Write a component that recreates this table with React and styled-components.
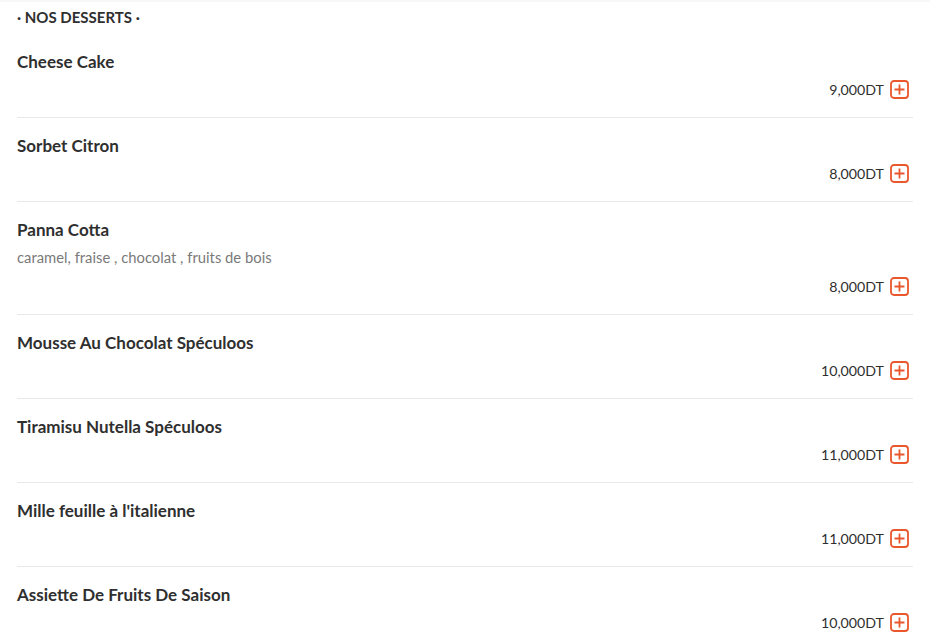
import React from "react";
import styled, { createGlobalStyle } from "styled-components";

const desserts = [
  { id: 1, name: "Cheese Cake", price: "9,000DT" },
  { id: 2, name: "Sorbet Citron", price: "8,000DT" },
  {
    id: 3,
    name: "Panna Cotta",
    desc: "caramel, fraise , chocolat , fruits de bois",
    price: "8,000DT",
  },
  { id: 4, name: "Mousse Au Chocolat Spéculoos", price: "10,000DT" },
  { id: 5, name: "Tiramisu Nutella Spéculoos", price: "11,000DT" },
  { id: 6, name: "Mille feuille à l'italienne", price: "11,000DT" },
  { id: 7, name: "Assiette De Fruits De Saison", price: "10,000DT" },
];

function AddIcon() {
  return (
    <svg width="19" height="19" viewBox="0 0 19 19" fill="none">
      <rect x="1" y="1" width="17" height="17" rx="3" stroke="#e9572c" strokeWidth="1.8" />
      <path d="M9.5 4.5v10M4.5 9.5h10" stroke="#e9572c" strokeWidth="1.8" />
    </svg>
  );
}

function App() {
  return (
    <>
      <GlobalStyle />
      <MenuStyled>
        <SectionTitle>· Nos desserts ·</SectionTitle>
        {desserts.map((item) => (
          <Item key={item.id}>
            <Name>{item.name}</Name>
            {item.desc && <Desc>{item.desc}</Desc>}
            <PriceRow>
              <span>{item.price}</span>
              <AddButton type="button" aria-label="Ajouter">
                <AddIcon />
              </AddButton>
            </PriceRow>
          </Item>
        ))}
      </MenuStyled>
    </>
  );
}

const GlobalStyle = createGlobalStyle`
  body {
    margin: 0;
    background: #ffffff;
    font-family: "Lato", "Open Sans", sans-serif;
    color: #2f2f2f;
  }
`;

const MenuStyled = styled.div`
  padding: 6px 17px 0 17px;
  border-top: 2px solid #f7f7f7;
`;

const SectionTitle = styled.h3`
  margin: 0 0 8px 0;
  font-size: 15px;
  line-height: 18px;
  font-weight: 700;
  text-transform: uppercase;
  color: #2f2f2f;
`;

const Item = styled.div`
  display: flex;
  flex-direction: column;
  padding: 18px 0;
  border-bottom: 1px solid #e9e9e9;
`;

const Name = styled.h4`
  margin: 0;
  font-size: 17px;
  line-height: 20px;
  font-weight: 700;
  color: #2f2f2f;
`;

const Desc = styled.p`
  margin: 7px 0 2px 0;
  font-size: 14.8px;
  line-height: 20px;
  color: #7a7a7a;
`;

const PriceRow = styled.div`
  margin-top: 7px;
  height: 20px;
  display: flex;
  justify-content: flex-end;
  align-items: center;
  gap: 6px;
  padding-right: 4px;
  font-size: 14.2px;
  color: #2f2f2f;
`;

const AddButton = styled.button`
  display: flex;
  padding: 0;
  border: none;
  background: none;
  cursor: pointer;
`;

export default App;
